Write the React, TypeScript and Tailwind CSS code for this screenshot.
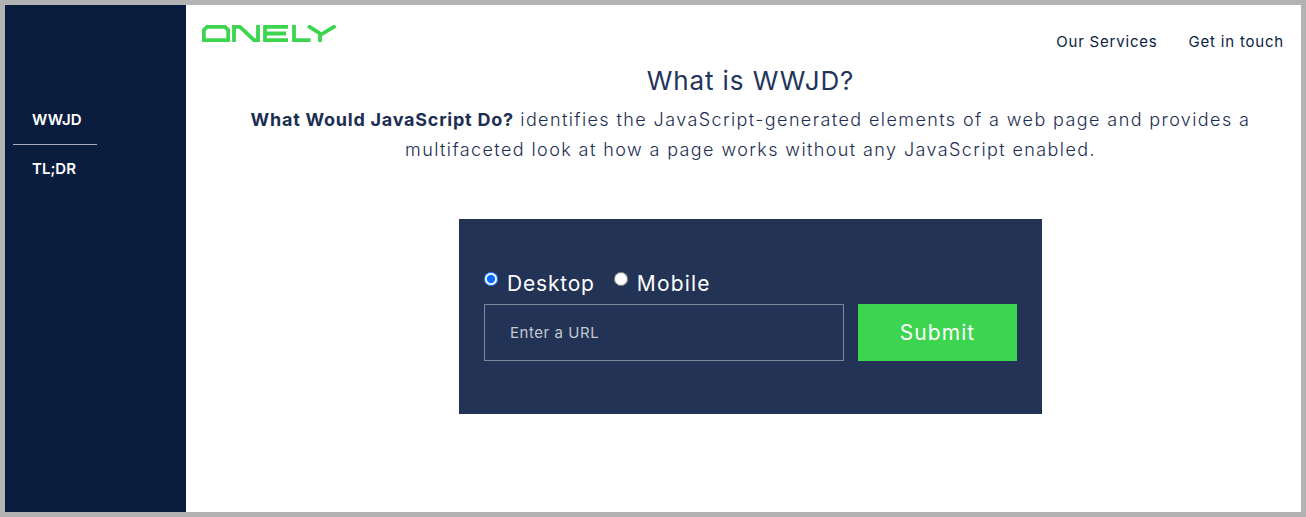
const Logo = () => (
  <svg width="135" height="17" viewBox="0 0 135 17" fill="none" stroke="#3dd54f" strokeWidth="3.8" className="block">
    <path d="M5 1.9H23L26.2 5V15.1H1.9V5Z" />
    <path d="M32 17V1.9H38L52 15.1H56V0" />
    <path d="M86 1.9H63V15.1H86M63 8.5H84" />
    <path d="M92 0V15.1H108.5" />
    <path d="M106 0.8L118.5 8.8M133.5 0.8L118 10.2V17" />
  </svg>
);

const App = () => {
  return (
    <div className="flex h-[517px] w-[1306px] overflow-hidden border-[5px] border-[#b3b3b3] bg-white font-['Inter',sans-serif]">
      <nav className="w-[181px] shrink-0 bg-[#0a1d3f] pt-[105px] text-white">
        <div className="ml-[8px] w-[84px] border-b border-[#a9adb5] pb-[14px] pl-[19px] text-[15px] leading-[20px] font-semibold">
          WWJD
        </div>
        <div className="ml-[8px] pt-[14px] pl-[19px] text-[15px] leading-[20px] font-semibold">TL;DR</div>
      </nav>
      <main className="flex min-w-0 flex-1 flex-col pl-[14px]">
        <header className="flex h-[58px] items-start justify-between pt-[20px] pr-[17px] pl-[2px]">
          <Logo />
          <div className="flex gap-[31px] pt-[7px] text-[15px] leading-[20px] tracking-[0.8px] text-[#0a1d3f]">
            <span>Our Services</span>
            <span>Get in touch</span>
          </div>
        </header>
        <h1 className="text-center text-[26px] leading-[36px] tracking-[0.9px] text-[#22345a]">What is WWJD?</h1>
        <p className="mx-auto mt-[6px] w-[1040px] text-center text-[18px] leading-[30px] font-light tracking-[1.4px] text-[#1c2e52]">
          <strong className="font-bold tracking-[0.75px]">What Would JavaScript Do?</strong> identifies the
          JavaScript-generated elements of a web page and provides a multifaceted look at how a page works without any
          JavaScript enabled.
        </p>
        <form className="mx-auto mt-[54px] h-[195px] w-[583px] bg-[#223355] px-[25px] pt-[50px]">
          <div className="flex h-[35px] items-start text-[21px] leading-[28px] tracking-[0.8px] text-white">
            <input type="radio" name="device" defaultChecked className="mt-[3px] h-[14px] w-[14px] accent-[#0a6cff]" />
            <label className="mt-[1px] mr-[19px] ml-[9px]">Desktop</label>
            <input type="radio" name="device" className="mt-[3px] h-[14px] w-[14px]" />
            <label className="mt-[1px] ml-[9px] tracking-[1.2px]">Mobile</label>
          </div>
          <div className="flex gap-[14px]">
            <input
              placeholder="Enter a URL"
              className="h-[57px] w-[360px] border border-[#7d889c] bg-transparent px-[25px] text-[15px] tracking-[0.55px] text-white placeholder:text-[#c3c8d1]"
            />
            <button type="button" className="h-[57px] w-[159px] bg-[#3dd54f] text-[21px] tracking-[1.1px] text-white">
              Submit
            </button>
          </div>
        </form>
      </main>
    </div>
  );
};

export default App;
